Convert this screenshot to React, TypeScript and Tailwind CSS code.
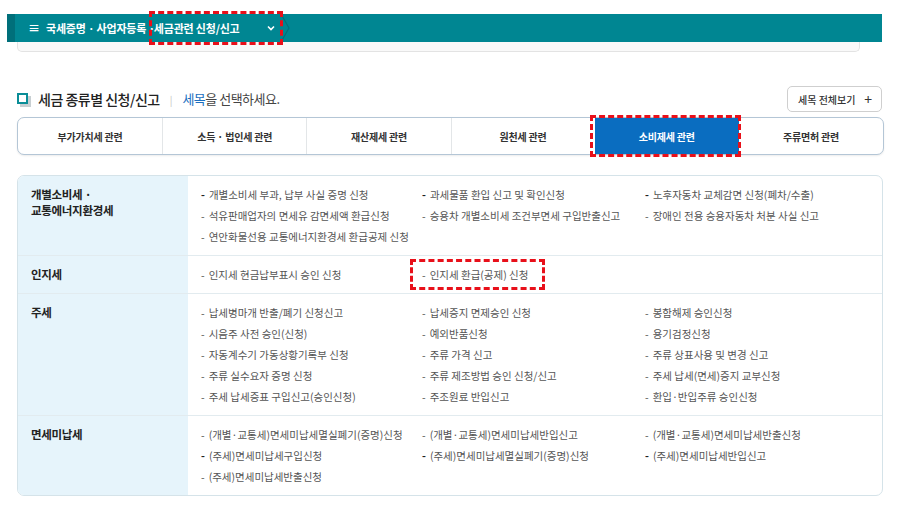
import React from "react";

type Item = { text: string; dark?: boolean; mark?: boolean };
type Group = { title: string[]; items: Item[] };

const tabs = ["부가가치세 관련", "소득 · 법인세 관련", "재산제세 관련", "원천세 관련", "소비제세 관련", "주류면허 관련"];

const groups: Group[] = [
  {
    title: ["개별소비세 ·", "교통에너지환경세"],
    items: [
      { text: "개별소비세 부과, 납부 사실 증명 신청", dark: true },
      { text: "과세물품 환입 신고 및 확인신청", dark: true },
      { text: "노후자동차 교체감면 신청(폐차/수출)", dark: true },
      { text: "석유판매업자의 면세유 감면세액 환급신청" },
      { text: "승용차 개별소비세 조건부면세 구입반출신고" },
      { text: "장애인 전용 승용자동차 처분 사실 신고" },
      { text: "연안화물선용 교통에너지환경세 환급공제 신청" },
    ],
  },
  {
    title: ["인지세"],
    items: [{ text: "인지세 현금납부표시 승인 신청" }, { text: "인지세 환급(공제) 신청", mark: true }],
  },
  {
    title: ["주세"],
    items: [
      { text: "납세병마개 반출/폐기 신청신고" },
      { text: "납세증지 면제승인 신청" },
      { text: "봉함해제 승인신청" },
      { text: "시음주 사전 승인(신청)" },
      { text: "예외반품신청" },
      { text: "용기검정신청" },
      { text: "자동계수기 가동상황기록부 신청" },
      { text: "주류 가격 신고" },
      { text: "주류 상표사용 및 변경 신고" },
      { text: "주류 실수요자 증명 신청" },
      { text: "주류 제조방법 승인 신청/신고" },
      { text: "주세 납세(면세)증지 교부신청" },
      { text: "주세 납세증표 구입신고(승인신청)" },
      { text: "주조원료 반입신고" },
      { text: "환입·반입주류 승인신청" },
    ],
  },
  {
    title: ["면세미납세"],
    items: [
      { text: "(개별·교통세)면세미납세멸실폐기(증명)신청" },
      { text: "(개별·교통세)면세미납세반입신고" },
      { text: "(개별·교통세)면세미납세반출신청" },
      { text: "(주세)면세미납세구입신청", dark: true },
      { text: "(주세)면세미납세멸실폐기(증명)신청", dark: true },
      { text: "(주세)면세미납세반입신고", dark: true },
      { text: "(주세)면세미납세반출신청" },
    ],
  },
];

function RedBox({ className }: { className: string }) {
  return <span className={`pointer-events-none absolute border-[3px] border-dashed border-[#e8101a] ${className}`} />;
}

export default function App() {
  return (
    <div
      className="relative h-[528px] w-[906px] overflow-hidden bg-white text-[#333]"
      style={{ fontFamily: '"Noto Sans CJK KR", "Noto Sans", sans-serif' }}
    >
      {/* breadcrumb bar */}
      <div className="pl-[7px] pr-[24px] pt-[14px]">
        <div className="flex h-[28px] items-center bg-[#008692]">
          <div className="h-full w-[8px] bg-[#006f7a]" />
          <span className="ml-[13px] text-[12px] font-bold leading-none text-white">≡</span>
          <span className="ml-[6px] text-[11px] font-bold tracking-[-0.2px] text-white">국세증명 · 사업자등록 ·</span>
          <div className="relative -ml-[1px] flex h-full w-[126px] items-center">
            <span className="text-[11px] font-bold tracking-[-0.2px] text-white">세금관련 신청/신고</span>
            <svg className="ml-auto mr-[4px]" width="10" height="10" viewBox="0 0 10 10">
              <path d="M2 3.5 L5 6.5 L8 3.5" fill="none" stroke="white" strokeWidth="1.6" />
            </svg>
            <svg className="absolute right-[-10px] top-0" width="10" height="28" viewBox="0 0 10 28">
              <path d="M1 0 L9 14 L1 28" fill="none" stroke="#00717c" strokeWidth="1.2" />
            </svg>
            <RedBox className="-left-[5px] -top-[3px] h-[34px] w-[134px]" />
          </div>
        </div>
        <div className="ml-[10px] mr-[22px] h-[10px] rounded-b-[5px] border border-t-0 border-[#e3e3e3] bg-[#f9f9f9]" />
      </div>

      {/* title row */}
      <div className="mt-[34px] flex items-center pl-[17px] pr-[24px]">
        <span className="relative mr-[7px] inline-block h-[13px] w-[14px]">
          <span className="absolute left-[3px] top-[3px] h-[11px] w-[11px] bg-[#c8cfd2]" />
          <span className="absolute left-0 top-0 h-[11px] w-[11px] border-2 border-[#0a8d97] bg-white" />
        </span>
        <span className="text-[14px] font-medium tracking-[-0.5px] text-[#222]">세금 종류별 신청/신고</span>
        <span className="mx-[10px] text-[10px] text-[#c4c4c4]">|</span>
        <span className="text-[13px] tracking-[-0.5px] text-[#444]">
          <span className="text-[#1b6fc0]">세목</span>을 선택하세요.
        </span>
        <button className="ml-auto flex h-[26px] w-[95px] items-center justify-between rounded-[5px] border border-[#cfcfcf] bg-white pl-[10px] pr-[9px] text-[10px] font-medium text-[#333]">
          세목 전체보기
          <span className="text-[14px] font-normal leading-none">+</span>
        </button>
      </div>

      {/* tabs */}
      <div className="mt-[5px] pl-[17px] pr-[22px]">
        <div className="grid h-[38px] grid-cols-6 rounded-[7px] border border-[#b4c6d6] bg-white shadow-[0_1px_2px_rgba(0,0,0,0.08)]">
          {tabs.map((t, i) => {
            const active = i === 4;
            return (
              <div
                key={t}
                className={`relative flex items-center justify-center text-[10px] font-bold tracking-[-0.2px] ${
                  active ? "bg-[#0a6dc0] text-white" : "text-[#333]"
                } ${i > 0 && !active && i !== 5 ? "border-l border-[#e3e6e8]" : ""}`}
              >
                {t}
                {active && <RedBox className="-bottom-[3px] -left-[5px] -right-[2px] -top-[3px]" />}
              </div>
            );
          })}
        </div>
      </div>

      {/* table */}
      <div className="mt-[20px] pl-[17px] pr-[23px]">
        <div className="overflow-hidden rounded-[7px] border border-[#d5e3e9]">
          {groups.map((g, gi) => (
            <div key={gi} className={`flex ${gi > 0 ? "border-t border-[#e2ebef]" : ""}`}>
              <div className="w-[170px] shrink-0 bg-[#e6f4fb] pl-[13px] pt-[10px] text-[11.5px] font-bold leading-[16px] tracking-[-0.3px] text-[#222]">
                {g.title.map((l) => (
                  <div key={l}>{l}</div>
                ))}
              </div>
              <div className="grid flex-1 grid-cols-[221px_223px_1fr] pb-[8px] pl-[13px] pt-[8px]">
                {g.items.map((it) => (
                  <div
                    key={it.text}
                    className="relative flex h-[21px] items-center whitespace-nowrap text-[10.5px] text-[#555]"
                  >
                    <span className={it.dark ? "mr-[4px] font-bold text-[#222]" : "mr-[4px]"}>-</span>
                    {it.text}
                    {it.mark && <RedBox className="-bottom-[5px] -left-[12px] -top-[5px] right-[100px]" />}
                  </div>
                ))}
              </div>
            </div>
          ))}
        </div>
      </div>
    </div>
  );
}
